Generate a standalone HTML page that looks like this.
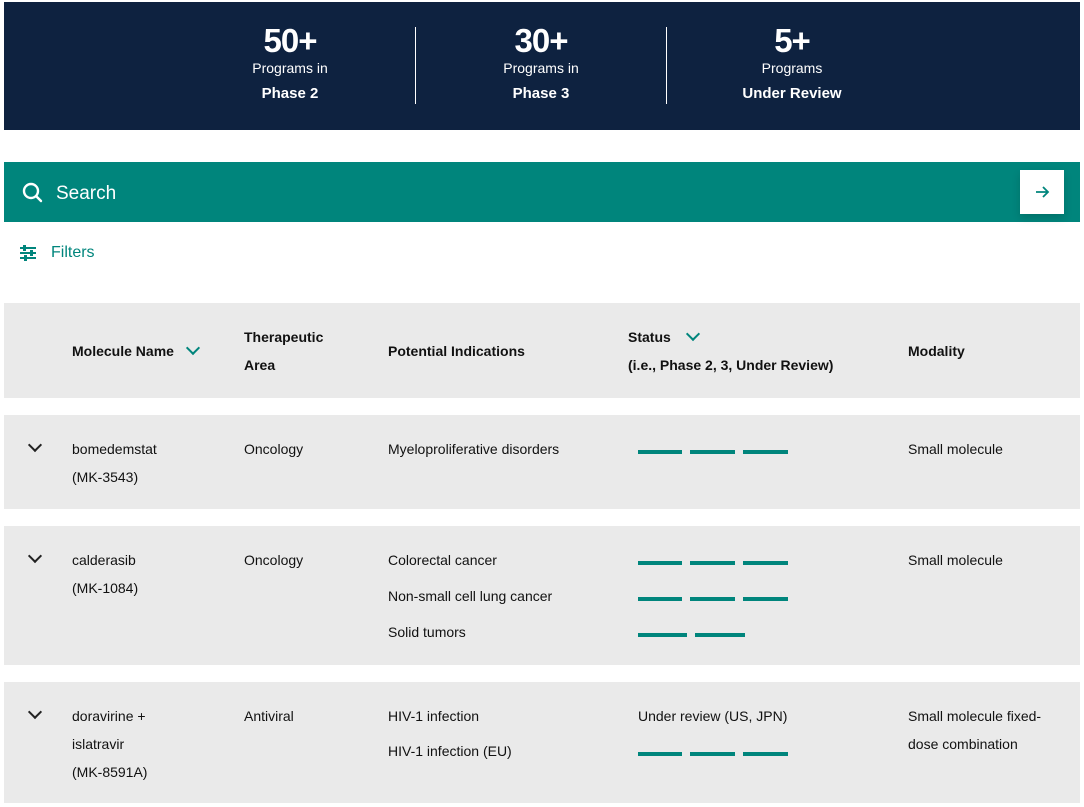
<!DOCTYPE html>
<html><head><style>
body{margin:0;width:1084px;height:807px;background:#fff;font-family:"Liberation Sans",sans-serif;position:relative;overflow:hidden;color:#111}
.a{position:absolute}
.ban{left:4px;top:2px;width:1076px;height:128px;background:#0e2240}
.st{position:absolute;width:200px;text-align:center;color:#fff}
.st .n{font-size:33px;font-weight:bold;line-height:34px;position:absolute;top:24px;width:200px;letter-spacing:-1px}
.st .l{font-size:14px;position:absolute;top:60px;width:200px}
.st .b{font-size:15px;font-weight:bold;position:absolute;top:85px;width:200px}
.dv{position:absolute;top:27px;width:1px;height:77px;background:#fff}
.gray{position:absolute;left:4px;width:1076px;background:#eaeaea}
.t{position:absolute;font-size:14px;line-height:28px}
.h{position:absolute;font-size:14px;font-weight:bold;line-height:28px}
.bar{position:absolute;height:4px;background:#00857c}
.chev{position:absolute;width:8px;height:8px;border-right:2px solid #222;border-bottom:2px solid #222;transform:rotate(45deg)}
</style></head><body>
<div class="a ban"></div>
<div class="st" style="left:190px"><div class="n">50+</div><div class="l">Programs in</div><div class="b">Phase 2</div></div>
<div class="dv" style="left:415px"></div>
<div class="st" style="left:441px"><div class="n">30+</div><div class="l">Programs in</div><div class="b">Phase 3</div></div>
<div class="dv" style="left:666px"></div>
<div class="st" style="left:692px"><div class="n">5+</div><div class="l">Programs</div><div class="b">Under Review</div></div>

<div class="a" style="left:4px;top:162px;width:1076px;height:60px;background:#00857c"></div>
<svg class="a" style="left:22px;top:182px" width="22" height="22" viewBox="0 0 22 22"><circle cx="9" cy="9" r="7" fill="none" stroke="#fff" stroke-width="2.4"/><line x1="14" y1="14" x2="19" y2="19" stroke="#fff" stroke-width="2.4" stroke-linecap="round"/></svg>
<div class="a" style="left:56px;top:183px;font-size:19px;color:#fff">Search</div>
<div class="a" style="left:1020px;top:170px;width:44px;height:44px;background:#fff;box-shadow:0 4px 8px rgba(0,0,0,.15)"></div>
<svg class="a" style="left:1034px;top:184px" width="16" height="16" viewBox="0 0 16 16"><path d="M2 8H14M9 3L14 8L9 13" fill="none" stroke="#00857c" stroke-width="1.8"/></svg>

<svg class="a" style="left:19px;top:245px" width="18" height="16" viewBox="0 0 18 16"><g stroke="#00857c" stroke-width="2"><line x1="1" y1="3" x2="17" y2="3"/><line x1="1" y1="8" x2="17" y2="8"/><line x1="1" y1="13" x2="17" y2="13"/></g><g fill="#00857c"><rect x="4" y="0" width="3" height="6"/><rect x="11" y="5" width="3" height="6"/><rect x="5" y="10" width="3" height="6"/></g></svg>
<div class="a" style="left:51px;top:244px;font-size:16px;color:#00857c">Filters</div>

<div class="gray" style="top:303px;height:95px"></div>
<div class="h" style="left:72px;top:337px">Molecule Name</div>
<div class="chev" style="left:188px;top:343px;border-color:#00857c"></div>
<div class="h" style="left:244px;top:323px">Therapeutic<br>Area</div>
<div class="h" style="left:388px;top:337px">Potential Indications</div>
<div class="h" style="left:628px;top:323px">Status<br>(i.e., Phase 2, 3, Under Review)</div>
<div class="chev" style="left:688px;top:329px;border-color:#00857c"></div>
<div class="h" style="left:908px;top:337px">Modality</div>

<div class="gray" style="top:415px;height:94px"></div>
<div class="chev" style="left:30px;top:440px"></div>
<div class="t" style="left:72px;top:435px">bomedemstat<br>(MK-3543)</div>
<div class="t" style="left:244px;top:435px">Oncology</div>
<div class="t" style="left:388px;top:435px">Myeloproliferative disorders</div>
<div class="bar" style="left:638px;top:450px;width:44px"></div><div class="bar" style="left:690px;top:450px;width:45px"></div><div class="bar" style="left:743px;top:450px;width:45px"></div>
<div class="t" style="left:908px;top:435px">Small molecule</div>

<div class="gray" style="top:526px;height:139px"></div>
<div class="chev" style="left:30px;top:551px"></div>
<div class="t" style="left:72px;top:546px">calderasib<br>(MK-1084)</div>
<div class="t" style="left:244px;top:546px">Oncology</div>
<div class="t" style="left:388px;top:546px">Colorectal cancer</div>
<div class="t" style="left:388px;top:582px">Non-small cell lung cancer</div>
<div class="t" style="left:388px;top:618px">Solid tumors</div>
<div class="bar" style="left:638px;top:561px;width:44px"></div><div class="bar" style="left:690px;top:561px;width:45px"></div><div class="bar" style="left:743px;top:561px;width:45px"></div>
<div class="bar" style="left:638px;top:597px;width:44px"></div><div class="bar" style="left:690px;top:597px;width:45px"></div><div class="bar" style="left:743px;top:597px;width:45px"></div>
<div class="bar" style="left:638px;top:633px;width:49px"></div><div class="bar" style="left:695px;top:633px;width:50px"></div>
<div class="t" style="left:908px;top:546px">Small molecule</div>

<div class="gray" style="top:682px;height:121px"></div>
<div class="chev" style="left:30px;top:707px"></div>
<div class="t" style="left:72px;top:702px">doravirine +<br>islatravir<br>(MK-8591A)</div>
<div class="t" style="left:244px;top:702px">Antiviral</div>
<div class="t" style="left:388px;top:702px">HIV-1 infection</div>
<div class="t" style="left:388px;top:737px">HIV-1 infection (EU)</div>
<div class="t" style="left:638px;top:702px">Under review (US, JPN)</div>
<div class="bar" style="left:638px;top:752px;width:44px"></div><div class="bar" style="left:690px;top:752px;width:45px"></div><div class="bar" style="left:743px;top:752px;width:45px"></div>
<div class="t" style="left:908px;top:702px">Small molecule fixed-<br>dose combination</div>
</body></html>
